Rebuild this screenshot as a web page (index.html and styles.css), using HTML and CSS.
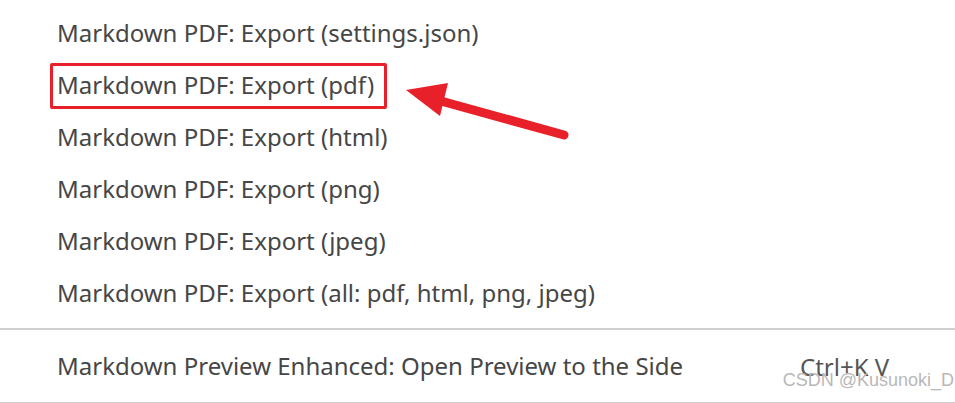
FILE: index.html
```html
<!DOCTYPE html>
<html>
<head>
<meta charset="utf-8">
<link rel="stylesheet" href="styles.css">
</head>
<body>
<div class="page">
  <ul class="list">
    <li class="row">Markdown PDF: Export (settings.json)</li>
    <li class="row">Markdown PDF: Export (pdf)</li>
    <li class="row">Markdown PDF: Export (html)</li>
    <li class="row">Markdown PDF: Export (png)</li>
    <li class="row">Markdown PDF: Export (jpeg)</li>
    <li class="row">Markdown PDF: Export (all: pdf, html, png, jpeg)</li>
  </ul>
  <div class="group">
    <div class="row cmd">
      <span class="label">Markdown Preview Enhanced: Open Preview to the Side</span>
      <span class="key">Ctrl+K V</span>
    </div>
  </div>
  <div class="highlight"></div>
  <svg class="arrow" width="955" height="403" viewBox="0 0 955 403">
    <line x1="564" y1="135" x2="430" y2="98" stroke="#e8202a" stroke-width="9" stroke-linecap="round"/>
    <polygon points="406,90 448,83 440,116" fill="#e8202a"/>
  </svg>
  <div class="watermark">CSDN @Kusunoki_D</div>
</div>
</body>
</html>
```
FILE: styles.css
```css
html, body {
  margin: 0;
  padding: 0;
  background: #ffffff;
}
.page {
  position: relative;
  width: 955px;
  height: 403px;
  overflow: hidden;
  font-family: "Noto Sans", "Open Sans", sans-serif;
  color: #464646;
}
.list {
  list-style: none;
  margin: 0;
  padding: 6px 0 0 0;
}
.row {
  height: 52px;
  display: flex;
  align-items: center;
  padding-left: 57px;
  font-size: 24px;
  white-space: nowrap;
}
.group {
  margin-top: 10px;
  border-top: 2px solid #d0d0d0;
  border-bottom: 2px solid #d0d0d0;
}
.cmd {
  height: 72px;
}
.label {
  width: 743px;
  margin-top: -2px;
}
.key {
  color: #555555;
  font-size: 24px;
  line-height: 1;
  margin-top: 2px;
}
.highlight {
  position: absolute;
  left: 50px;
  top: 63px;
  width: 331px;
  height: 40px;
  border: 3px solid #e8202a;
  border-radius: 2px;
}
.arrow {
  position: absolute;
  left: 0;
  top: 0;
}
.watermark {
  position: absolute;
  right: 1px;
  top: 371px;
  line-height: 1;
  font-family: "Liberation Sans", Arial, sans-serif;
  font-size: 18px;
  color: #b8b8b8;
}
```
